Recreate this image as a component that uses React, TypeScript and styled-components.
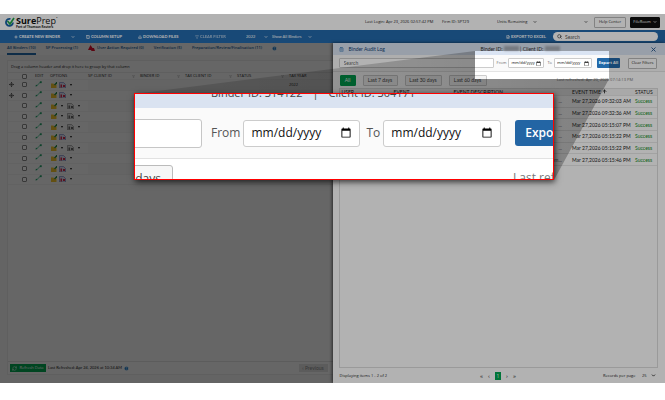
import React from "react";
import styled, { createGlobalStyle } from "styled-components";
import {
  ChevronDown, Plus, Columns2, Download, Filter, FileSpreadsheet, Search, X,
  ArrowUp, RefreshCw, Move, HelpCircle, ClipboardList,
} from "lucide-react";

const Global = createGlobalStyle`
  * { box-sizing: border-box; }
  body { margin: 0; background: #fff; font-family: Lato, "Open Sans", sans-serif; font-size: 5px; line-height: 6px; color: #222; }
  button, input, select { font: inherit; color: inherit; margin: 0; padding: 0; border: 0; background: none; }
  button { white-space: nowrap; }
  svg { flex: none; }
`;

const Stage = styled.div`
  position: relative;
  margin: 14px 0 17px;
  overflow: hidden;
`;
const Shell = styled.div`
  display: flex;
  flex-direction: column;
  min-height: calc(100vh - 31px);
`;

const TopBar = styled.header`
  display: grid;
  grid-template-columns: 1fr 77px 55px 87px 10px 32px 34px;
  align-items: center;
  height: 16px;
  padding: 0 5px;
  background: #fff;
  font: 4px/6px "Open Sans", sans-serif;
  white-space: nowrap;
  & > :last-child { margin-left: 4px; }
`;
const Brand = styled.div`
  display: flex;
  align-items: center;
  gap: 1px;
`;
const BrandName = styled.div`
  font: 9px/9px "Open Sans", sans-serif;
  color: #111;
  b { font-weight: 700; }
`;
const BrandNote = styled.div`
  font: 700 3px/4px "Open Sans", sans-serif;
`;
const Pick = styled.label`
  display: inline-flex;
  align-items: center;
  gap: 2px;
`;
const PlainSelect = styled.select<{ $w: number }>`
  appearance: none;
  width: ${(p) => p.$w}px;
  line-height: 8px;
  outline: none;
`;
const BoxButton = styled.button<{ $dark?: boolean }>`
  display: flex;
  align-items: center;
  justify-content: center;
  gap: 2px;
  height: 11px;
  border: 1px solid ${(p) => (p.$dark ? "#111" : "#bbb")};
  border-radius: 1px;
  background: ${(p) => (p.$dark ? "#111" : "#fff")};
  color: ${(p) => (p.$dark ? "#fff" : "#222")};
`;

const NavBar = styled.nav`
  display: grid;
  grid-template-columns: 57px 15px 52px 57px 51px 26px 1fr 47px 105px;
  align-items: center;
  height: 13px;
  padding: 0 7px 0 14px;
  background: #2369ab;
  color: #fff;
  font-size: 4px;
`;
const NavItem = styled.button<{ $off?: boolean }>`
  display: flex;
  align-items: center;
  gap: 1px;
  font-weight: 700;
  opacity: ${(p) => (p.$off ? 0.6 : 1)};
`;
const SearchPill = styled.label`
  display: flex;
  align-items: center;
  gap: 3px;
  height: 9px;
  padding: 0 4px;
  border-radius: 5px;
  background: #fff;
  color: #333;
  font-size: 5px;
  input { width: 100%; outline: none; }
  input::placeholder { color: #555; }
`;

const Workspace = styled.div`
  flex: 1;
  display: grid;
  grid-template-columns: 1fr 1fr;
`;
const Binders = styled.main`
  position: relative;
  display: flex;
  flex-direction: column;
  min-width: 0;
  background: #f1f1f1;
  font: 4px/6px "Open Sans", sans-serif;
  &::after { content: ""; position: absolute; inset: 0; background: rgba(0, 0, 0, 0.4); pointer-events: none; }
`;
const Tabs = styled.div`
  display: flex;
  gap: 10px;
  height: 12px;
  padding-left: 7px;
  background: #f7f7f7;
`;
const Tab = styled.button<{ $on?: boolean }>`
  display: flex;
  align-items: center;
  gap: 2px;
  height: 12px;
  font-weight: 600;
  color: #1c5a96;
  border-bottom: ${(p) => (p.$on ? "2px solid #2369ab" : "2px solid transparent")};
`;
const Board = styled.section`
  flex: 1;
  display: flex;
  flex-direction: column;
  margin: 5px 0 8px 7px;
  background: #f6f6f6;
  border: 1px solid #e4e4e4;
  border-right: 0;
`;
const GroupHint = styled.p`
  margin: 0;
  height: 11px;
  padding: 0 3px;
  line-height: 11px;
`;
const BinderTable = styled.table`
  width: 100%;
  height: 113px;
  border-collapse: collapse;
  table-layout: fixed;
  th, td { padding: 0; text-align: left; font-size: 4px; line-height: 6px; border-bottom: 1px solid #ebebeb; white-space: nowrap; vertical-align: middle; }
  th { font-weight: 400; border-top: 1px solid #e4e4e4; color: #222; }
  tbody tr:nth-child(odd) td:nth-child(n + 5) { background: #f0f0f0; }
  col.pin { width: 14px; }
  col.check { width: 13px; }
  col.edit { width: 15px; }
  col.options { width: 38px; }
  col.wide { width: 52px; }
  col.mid { width: 45px; }
`;
const HeadCell = styled.span`
  display: flex;
  justify-content: space-between;
  align-items: center;
  padding-right: 5px;
`;
const Check = styled.input`
  appearance: none;
  display: block;
  width: 5px;
  height: 5px;
  border: 1px solid #888;
  border-radius: 1px;
  background: #fff;
`;
const Options = styled.div`
  display: flex;
  align-items: center;
  gap: 2px;
  padding-left: 1px;
`;
const BoardFoot = styled.footer`
  display: flex;
  align-items: center;
  gap: 2px;
  height: 13px;
  margin-top: auto;
  padding: 0 5px 0 2px;
  border-top: 1px solid #ddd;
  font-family: Lato, sans-serif;
`;
const Green = styled.button`
  display: flex;
  align-items: center;
  justify-content: center;
  gap: 2px;
  height: 8px;
  width: 36px;
  background: #00a651;
  color: #fff;
  font-family: "Open Sans", sans-serif;
`;
const PrevButton = styled.button`
  margin-left: auto;
  height: 8px;
  width: 29px;
  background: #dcdcdc;
  color: #888;
  font-size: 5px;
`;

const Drawer = styled.aside`
  position: relative;
  display: flex;
  flex-direction: column;
  min-width: 0;
  background: #fff;
  box-shadow: -1px 0 3px rgba(0, 0, 0, 0.6);
`;
const DrawerHead = styled.header`
  display: grid;
  grid-template-columns: 10px 132px 1fr 8px;
  align-items: center;
  height: 12px;
  padding: 0 7px 0 6px;
  background: #dae4f3;
  color: #333;
  h2 { margin: 0; font-size: 5px; line-height: 6px; font-weight: 400; color: #123f74; }
`;
const Redacted = styled.span<{ $w: number }>`
  display: inline-block;
  width: ${(p) => p.$w}px;
  height: 5px;
  vertical-align: top;
  background: #a9afb9;
  filter: blur(1px);
`;
const Filters = styled.div`
  display: flex;
  align-items: center;
  height: 17px;
  padding: 0 8px 0 6px;
  border-bottom: 1px solid #e4e4e4;
  background: #fafafa;
`;
const Field = styled.input`
  flex: 1;
  min-width: 0;
  height: 10px;
  padding: 0 4px;
  margin-right: 3px;
  border: 1px solid #ccc;
  border-radius: 1px;
  background: #fff;
  &::placeholder { color: #666; }
`;
const DateLabel = styled.label`
  display: flex;
  align-items: center;
  gap: 2px;
  margin-right: 3px;
  font: 4px/6px "Open Sans", sans-serif;
  color: #666;
`;
const DateBox = styled.input<{ $w: number; $h: number; $pad: number; $icon: number }>`
  width: ${(p) => p.$w}px;
  height: ${(p) => p.$h}px;
  padding: 0 ${(p) => p.$pad}px;
  border: 1px solid #ccc;
  border-radius: ${(p) => (p.$h > 15 ? 3 : 1)}px;
  background: #fff;
  color: #111;
  &::-webkit-datetime-edit, &::-webkit-datetime-edit-fields-wrapper { padding: 0; }
  &::-webkit-datetime-edit-month-field, &::-webkit-datetime-edit-day-field, &::-webkit-datetime-edit-year-field { padding: 0; }
  &::-webkit-calendar-picker-indicator { width: ${(p) => p.$icon}px; height: ${(p) => p.$icon}px; padding: 0; margin: 0; background-size: contain; }
`;
const Export = styled.button`
  width: 23px;
  height: 10px;
  margin: 0 8px 0 2px;
  border-radius: 1px;
  background: #2268a8;
  color: #fff;
  font: 700 4px/6px "Open Sans", sans-serif;
`;
const ClearButton = styled(BoxButton)`
  width: 29px;
  font: 4px/6px "Open Sans", sans-serif;
`;
const Chips = styled.div`
  display: flex;
  align-items: center;
  gap: 7px;
  height: 16px;
  padding: 0 32px 0 7px;
`;
const Chip = styled.button<{ $on?: boolean; $w: number }>`
  width: ${(p) => p.$w}px;
  height: 11px;
  border: 1px solid ${(p) => (p.$on ? "#00a651" : "#ccc")};
  border-radius: 1px;
  background: ${(p) => (p.$on ? "#00a651" : "#f4f4f4")};
  color: ${(p) => (p.$on ? "#fff" : "#444")};
`;
const Refreshed = styled.span`
  margin-left: auto;
  color: #777;
  font: 4px/6px "Open Sans", sans-serif;
  white-space: nowrap;
`;
const LogArea = styled.div`
  flex: 1;
  margin: 0 7px 0 6px;
  border: 1px solid #ddd;
  border-width: 0 1px 1px;
`;
const LogTable = styled.table`
  width: 100%;
  height: 78px;
  border-collapse: collapse;
  table-layout: fixed;
  th, td { padding: 0 0 0 2px; text-align: left; font-size: 5px; line-height: 6px; white-space: nowrap; font-weight: 400; border-bottom: 1px solid #e9e9e9; }
  th { background: #f3f3f3; border-top: 1px solid #ddd; }
  td:nth-child(3) { text-align: right; padding-right: 8px; color: #666; }
  td:nth-child(5) { color: #118a22; }
  col.user { width: 52px; }
  col.event { width: 60px; }
  col.time { width: 63px; }
  col.status { width: 24px; }
`;
const Pager = styled.footer`
  display: grid;
  grid-template-columns: 1fr 123px 39px 14px;
  align-items: center;
  height: 15px;
  padding: 0 9px 0 7px;
  font: 4px/6px "Open Sans", sans-serif;
`;
const Pages = styled.div`
  display: flex;
  align-items: center;
  gap: 5px;
`;
const PageButton = styled.button<{ $on?: boolean }>`
  height: 8px;
  min-width: ${(p) => (p.$on ? 6 : 2)}px;
  font-size: ${(p) => (p.$on ? 5 : 6)}px;
  background: ${(p) => (p.$on ? "#00a651" : "transparent")};
  color: ${(p) => (p.$on ? "#fff" : "#222")};
`;

const Shade = styled.svg`
  position: absolute;
  left: 0;
  top: 0;
  width: 100%;
  height: 100%;
  pointer-events: none;
`;

const Magnifier = styled.section`
  position: absolute;
  left: 134px;
  top: 79px;
  width: 420px;
  height: 87px;
  overflow: hidden;
  border: 1px solid #f00;
  background: #fff;
  box-shadow: 1px 2px 6px rgba(0, 0, 0, 0.7);
  font: 13px/16px "Open Sans", sans-serif;
  color: #555;
`;
const LensHead = styled.div`
  display: flex;
  align-items: flex-end;
  gap: 10px;
  height: 14px;
  padding: 0 0 7px 76px;
  background: #dae3f1;
  color: #444;
  font-size: 11px;
  white-space: nowrap;
`;
const LensFilters = styled.div`
  display: flex;
  align-items: center;
  height: 51px;
  background: #fafafa;
  border-bottom: 1px solid #e2e2e2;
`;
const LensField = styled.input`
  flex: none;
  width: 80px;
  height: 29px;
  margin: 0 9px 0 -13px;
  border: 1px solid #c6c6c6;
  border-radius: 3px;
  background: #fff;
`;
const LensLabel = styled.label`
  display: flex;
  align-items: center;
  flex: none;
  margin-right: 6px;
  gap: 3px;
  font-size: 12px;
`;
const LensExport = styled.button`
  flex: none;
  width: 66px;
  height: 26px;
  margin-left: 8px;
  padding-left: 10px;
  border-radius: 3px;
  background: #2365a4;
  color: #fff;
  font-size: 12px;
  font-weight: 600;
  text-align: left;
`;
const LensFoot = styled.div`
  display: flex;
  justify-content: space-between;
  align-items: flex-start;
  padding-top: 6px;
  font-size: 12px;
  color: #777;
  white-space: nowrap;
  span { width: 40px; padding-top: 5px; }
`;
const LensChip = styled.button`
  width: 60px;
  height: 28px;
  margin-left: -22px;
  padding-right: 11px;
  border: 1px solid #bbb;
  border-radius: 3px;
  background: #f6f6f6;
  color: #444;
  text-align: right;
`;

const Dot = styled.span`
  width: 0;
  height: 0;
  margin: 0 2px;
  border: 1px solid transparent;
  border-top: 2px solid #111;
  border-bottom: 0;
`;

const Logo = () => (
  <svg width="10" height="11" viewBox="0 0 20 22" fill="none">
    <path d="M16 11a7 7 0 1 1-5-7" stroke="#1763a6" strokeWidth="3.6" />
    <path d="M5 8l5 6 8-12" stroke="#1fa54a" strokeWidth="3.4" />
  </svg>
);
const EditIcon = () => (
  <svg width="7" height="6" viewBox="0 0 14 12">
    <path d="M3 10L11 2" stroke="#5cc59a" strokeWidth="2" />
    <path d="M1 11l1-4 3 3zM9 2l3-2 2 2-2 3z" fill="#12965c" />
  </svg>
);
const FolderIcon = () => (
  <svg width="6" height="6" viewBox="0 0 12 12">
    <path d="M0 3h5l1 2h5v7H0z" fill="#efc02d" />
    <path d="M6 5l4-4V0h2v4h-1L8 7z" fill="#2a8a4a" />
  </svg>
);
const BinderIcon = ({ gray }: { gray?: boolean }) => (
  <svg width="7" height="6" viewBox="0 0 14 12">
    <path d="M1 1h8l4 4v7H1z" fill={gray ? "#ddd" : "#d8dcf2"} stroke={gray ? "#666" : "#4a5fa8"} />
    <path d="M3 5h3v6H3zM8 6h4v4H8z" fill={gray ? "#666" : "#d42a4a"} />
  </svg>
);
const AlertIcon = () => (
  <svg width="7" height="6" viewBox="0 0 14 12">
    <path d="M5 0l4 6h3l2 6H7l-1-2H0z" fill="#e0102c" />
  </svg>
);

const rows = [
  { pin: true, two: false, year: "2022" }, { pin: true, two: false }, { two: true }, { two: true }, { two: true },
  { two: false }, { two: true }, { two: false }, { two: false }, { two: false },
];
const log = [
  ["...", "Mar 27,2026 09:32:03 AM"], ["...", "Mar 27,2026 09:32:36 AM"], ["...", "Mar 27,2026 05:15:07 PM"],
  ["...", "Mar 27,2026 05:15:22 PM"], ["...", "Mar 27,2026 05:15:22 PM"], ["room...", "Mar 27,2026 05:15:46 PM"],
];
const filterable = ["SP CLIENT ID", "BINDER ID", "TAX CLIENT ID", "STATUS"];

export default function App() {
  return (
    <>
      <Global />
      <Stage>
        <Shell>
          <TopBar>
            <Brand>
              <Logo />
              <div>
                <BrandName><b>Sure</b>Prep˙</BrandName>
                <BrandNote>Part of Thomson Reuters</BrandNote>
              </div>
            </Brand>
            <span>Last Login: Apr 23, 2026 02:57:42 PM</span>
            <span>Firm ID: SPT29</span>
            <Pick>
              <PlainSelect $w={34} aria-label="Units"><option>Units Remaining</option></PlainSelect>
              <ChevronDown size={4} strokeWidth={4} />
            </Pick>
            <ChevronDown size={4} strokeWidth={4} />
            <BoxButton>Help Center</BoxButton>
            <BoxButton $dark>FileRoom <ChevronDown size={4} strokeWidth={4} /></BoxButton>
          </TopBar>
          <NavBar>
            <NavItem><Plus size={4} strokeWidth={4} />CREATE NEW BINDER</NavItem>
            <ChevronDown size={4} strokeWidth={4} />
            <NavItem><Columns2 size={4} strokeWidth={3} />COLUMN SETUP</NavItem>
            <NavItem><Download size={4} strokeWidth={3} />DOWNLOAD FILES</NavItem>
            <NavItem $off><Filter size={4} strokeWidth={3} />CLEAR FILTER</NavItem>
            <Pick>
              <PlainSelect $w={16} aria-label="Tax year"><option>2022</option></PlainSelect>
              <ChevronDown size={4} strokeWidth={4} />
            </Pick>
            <Pick>
              <PlainSelect $w={34} aria-label="Binders shown"><option>Show All Binders</option></PlainSelect>
              <ChevronDown size={4} strokeWidth={4} />
            </Pick>
            <NavItem><FileSpreadsheet size={4} strokeWidth={3} />EXPORT TO EXCEL</NavItem>
            <SearchPill><Search size={5} strokeWidth={3} /><input placeholder="Search" aria-label="Search binders" /></SearchPill>
          </NavBar>
          <Workspace>
            <Binders>
              <Tabs>
                <Tab $on>All Binders (10)</Tab>
                <Tab>SP Processing (1)</Tab>
                <Tab><AlertIcon />User Action Required (0)</Tab>
                <Tab>Verification (5)</Tab>
                <Tab>Preparation/Review/Finalisation (11)</Tab>
                <Tab aria-label="Help"><HelpCircle size={5} fill="#1574c4" color="#fff" /></Tab>
              </Tabs>
              <Board>
                <GroupHint>Drag a column header and drop it here to group by that column</GroupHint>
                <BinderTable>
                  <colgroup>
                    <col className="pin" /><col className="check" /><col className="edit" />
                    <col className="options" /><col className="wide" /><col className="mid" />
                    <col className="wide" /><col className="wide" /><col />
                  </colgroup>
                  <thead>
                    <tr>
                      <th /><th><Check type="checkbox" aria-label="Select all" /></th><th>EDIT</th><th>OPTIONS</th>
                      {filterable.map((name) => (
                        <th key={name}><HeadCell>{name}<Filter size={3} color="#777" /></HeadCell></th>
                      ))}
                      <th>TAX YEAR</th>
                    </tr>
                  </thead>
                  <tbody>
                    {rows.map((row, i) => (
                      <tr key={i}>
                        <td>{row.pin && <Options><Move size={5} color="#444" strokeWidth={3} /></Options>}</td>
                        <td><Check type="checkbox" aria-label={`Select row ${i + 1}`} /></td>
                        <td><EditIcon /></td>
                        <td>
                          <Options>
                            <FolderIcon />{row.two && <Dot />}<BinderIcon gray={row.two} /><Dot />
                          </Options>
                        </td>
                        <td /><td /><td /><td />
                        <td>{row.year}</td>
                      </tr>
                    ))}
                  </tbody>
                </BinderTable>
                <BoardFoot>
                  <Green><RefreshCw size={5} />Refresh Data</Green>
                  <span>Last Refreshed: Apr 24, 2026 at 10:34 AM</span>
                  <HelpCircle size={5} fill="#1574c4" color="#fff" />
                  <PrevButton>‹ Previous</PrevButton>
                </BoardFoot>
              </Board>
            </Binders>
            <Drawer>
              <DrawerHead>
                <ClipboardList size={5} color="#2369ab" />
                <h2>Binder Audit Log</h2>
                <span>Binder ID: <Redacted $w={15} /> | Client ID: <Redacted $w={15} /></span>
                <X size={7} color="#1d4f86" strokeWidth={3} />
              </DrawerHead>
              <Filters>
                <Field placeholder="Search" aria-label="Search log" />
                <DateLabel>From<DateBox type="date" $w={36} $h={10} $pad={2} $icon={5} /></DateLabel>
                <DateLabel>To<DateBox type="date" $w={38} $h={10} $pad={2} $icon={5} /></DateLabel>
                <Export>Export All</Export>
                <ClearButton>Clear Filters</ClearButton>
              </Filters>
              <Chips>
                <Chip $on $w={16}>All</Chip>
                <Chip $w={35}>Last 7 days</Chip>
                <Chip $w={37}>Last 30 days</Chip>
                <Chip $w={38}>Last 60 days</Chip>
                <Refreshed>Last refreshed: Apr 20, 2026 07:14:13 PM</Refreshed>
              </Chips>
              <LogArea>
                <LogTable>
                  <colgroup>
                    <col className="user" /><col className="event" /><col />
                    <col className="time" /><col className="status" />
                  </colgroup>
                  <thead>
                    <tr><th>USER</th><th>EVENT</th><th>EVENT DESCRIPTION</th><th>EVENT TIME <ArrowUp size={5} strokeWidth={4} /></th><th>STATUS</th></tr>
                  </thead>
                  <tbody>
                    {log.map(([text, time], i) => (
                      <tr key={i}><td /><td /><td>{text}</td><td>{time}</td><td>Success</td></tr>
                    ))}
                  </tbody>
                </LogTable>
              </LogArea>
              <Pager>
                <span>Displaying items 1 - 2 of 2</span>
                <Pages>
                  <PageButton aria-label="First">«</PageButton>
                  <PageButton aria-label="Previous">‹</PageButton>
                  <PageButton $on>1</PageButton>
                  <PageButton aria-label="Next">›</PageButton>
                  <PageButton aria-label="Last">»</PageButton>
                </Pages>
                <label htmlFor="per-page">Records per page</label>
                <Pick>
                  <PlainSelect id="per-page" $w={7}><option>25</option></PlainSelect>
                  <ChevronDown size={5} strokeWidth={4} />
                </Pick>
              </Pager>
            </Drawer>
          </Workspace>
        </Shell>

        <Shade aria-hidden="true">
          <defs>
            <linearGradient id="beam" x1="1" y1="0" x2="0" y2="0">
              <stop offset="0" stopColor="#000" stopOpacity="0.28" />
              <stop offset="0.4" stopColor="#000" stopOpacity="0.2" />
              <stop offset="1" stopColor="#000" stopOpacity="0.12" />
            </linearGradient>
          </defs>
          <path d="M0 0H4000V4000H0ZM475 37V65H609V37Z" fillRule="evenodd" fill="#000" fillOpacity="0.3" />
          <path d="M134 80L475 37V65H609L554 166H134Z" fill="url(#beam)" />
        </Shade>

        <Magnifier aria-label="Date filters, enlarged">
          <LensHead><span>Binder ID: 314122</span><span>|</span><span>Client ID: 304171</span></LensHead>
          <LensFilters>
            <LensField aria-label="Search, enlarged" />
            <LensLabel>From<DateBox type="date" $w={117} $h={27} $pad={7} $icon={12} /></LensLabel>
            <LensLabel>To<DateBox type="date" $w={118} $h={27} $pad={7} $icon={12} /></LensLabel>
            <LensExport>Export All</LensExport>
          </LensFilters>
          <LensFoot>
            <LensChip>60 days</LensChip>
            <span>Last refreshed</span>
          </LensFoot>
        </Magnifier>
      </Stage>
    </>
  );
}
